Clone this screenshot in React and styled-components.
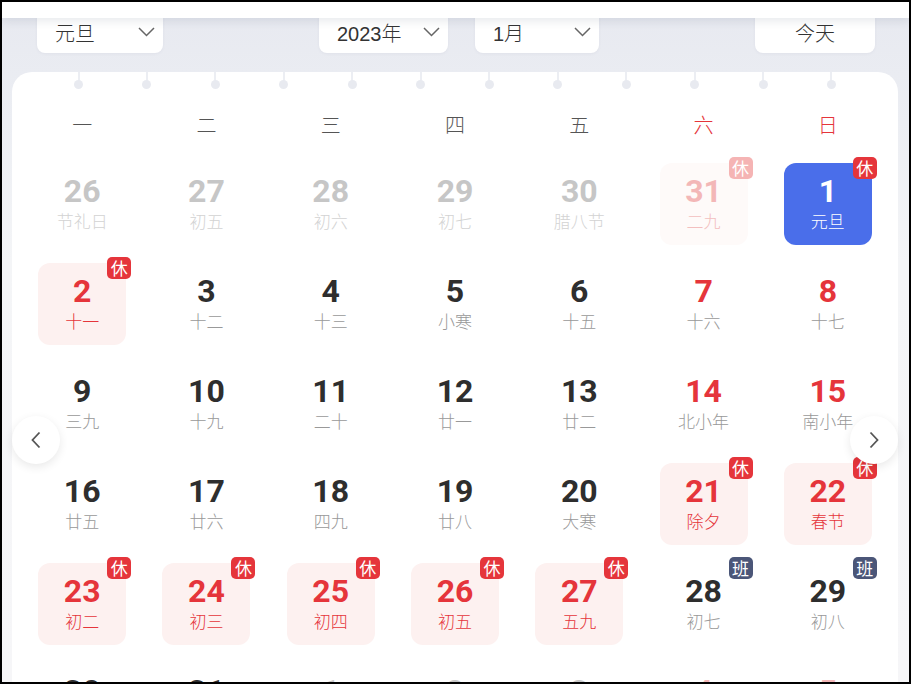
import React from "react";
import styled, { createGlobalStyle } from "styled-components";

const Global = createGlobalStyle`
  html, body { margin: 0; padding: 0; background: #fff; }
  * { box-sizing: border-box; }
`;

const Frame = styled.div`
  width: 911px;
  height: 684px;
  border: 2px solid #000;
  overflow: hidden;
  background: linear-gradient(#e7e9f0 0px, #eceef3 120px, #f4f5f7 260px, #f6f6f8 100%);
  font-family: "Noto Sans CJK SC", "Noto Sans", sans-serif;
  display: flex;
  flex-direction: column;
`;

const TopBar = styled.div`
  height: 16px;
  flex: none;
  background: #fff;
  box-shadow: 0 3px 10px rgba(60, 70, 100, 0.12);
  position: relative;
  z-index: 3;
`;

const Toolbar = styled.div`
  margin-top: -9px;
  padding: 0 34px 0 35px;
  display: flex;
  justify-content: space-between;
  align-items: flex-end;
  flex: none;
`;

const Group = styled.div`
  display: flex;
  gap: 27px;
`;

const SelectBox = styled.div`
  width: ${(p) => p.$w}px;
  height: 44px;
  background: #fff;
  border-radius: 8px;
  display: flex;
  align-items: center;
  justify-content: ${(p) => (p.$center ? "center" : "space-between")};
  padding-top: 2px;
  padding-right: ${(p) => (p.$center ? "0" : "8px")};
  padding-left: ${(p) => (p.$center ? "0" : "18px")};
  color: #333;
  font-size: 20px;
  font-weight: 300;
  font-family: ${(p) =>
    p.$latin
      ? '"Liberation Sans", "Noto Sans CJK SC", sans-serif'
      : '"Noto Sans CJK SC", sans-serif'};
  box-shadow: 0 1px 3px rgba(80, 90, 120, 0.06);
`;

const Chevron = styled.svg`
  width: 17px;
  height: 10px;
  flex: none;
`;

const Card = styled.div`
  margin: 19px 11px 0 10px;
  background: #fff;
  border-radius: 20px 20px 0 0;
  flex: 1;
  position: relative;
  padding: 0 8px;
`;

const Pins = styled.div`
  display: flex;
  justify-content: space-between;
  padding: 0 54px;
  height: 18px;
`;

const Pin = styled.div`
  width: 9px;
  height: 18px;
  display: flex;
  flex-direction: column;
  align-items: center;
  &::before {
    content: "";
    width: 2px;
    height: 9px;
    background: #eceef3;
  }
  &::after {
    content: "";
    width: 9px;
    height: 9px;
    border-radius: 50%;
    background: #e8eaf0;
    margin-top: -1px;
  }
`;

const WeekRow = styled.div`
  display: grid;
  grid-template-columns: repeat(7, 1fr);
  margin-top: 15px;
  height: 40px;
  margin-bottom: 9px;
`;

const WeekDay = styled.div`
  text-align: center;
  line-height: 40px;
  font-size: 20px;
  font-weight: 300;
  color: ${(p) => (p.$red ? "#e5353b" : "#555")};
`;

const Grid = styled.div`
  display: grid;
  grid-template-columns: repeat(7, 1fr);
  grid-auto-rows: 100px;
`;

const Slot = styled.div`
  display: flex;
  align-items: center;
  justify-content: center;
`;

const palettes = {
  normal: { bg: "transparent", num: "#2e2e2e", lunar: "#999" },
  weekend: { bg: "transparent", num: "#e5353b", lunar: "#999" },
  holiday: { bg: "#fdf1f0", num: "#e5353b", lunar: "#e5353b" },
  work: { bg: "transparent", num: "#2e2e2e", lunar: "#999" },
  prev: { bg: "transparent", num: "#c6c6c6", lunar: "#d3d3d3" },
  prevHoliday: { bg: "#fefaf9", num: "#f3b7b7", lunar: "#f3bfbf" },
  nextWeekend: { bg: "transparent", num: "#f3b7b7", lunar: "#f3bfbf" },
  selected: { bg: "#4a6eea", num: "#fff", lunar: "#fff" },
};

const Cell = styled.div`
  width: 88px;
  height: 82px;
  border-radius: 12px;
  background: ${(p) => palettes[p.$kind].bg};
  position: relative;
  display: flex;
  flex-direction: column;
  align-items: center;
  padding-top: 11px;
`;

const DayNum = styled.div`
  font-family: Roboto, "Liberation Sans", sans-serif;
  font-weight: 700;
  font-size: 32px;
  line-height: 34px;
  color: ${(p) => palettes[p.$kind].num};
`;

const Lunar = styled.div`
  margin-top: 2px;
  font-size: 17px;
  font-weight: 300;
  line-height: 22px;
  color: ${(p) => palettes[p.$kind].lunar};
`;

const Badge = styled.div`
  position: absolute;
  top: -6px;
  right: -5px;
  width: 24px;
  height: 22px;
  border-radius: 5px;
  background: ${(p) => p.$bg};
  color: #fff;
  font-size: 17px;
  line-height: 22px;
  text-align: center;
`;

const Arrow = styled.div`
  position: absolute;
  top: 344px;
  ${(p) => (p.$side === "left" ? "left: 0;" : "right: 0;")}
  width: 48px;
  height: 48px;
  border-radius: 50%;
  background: #fff;
  box-shadow: 0 3px 10px rgba(0, 0, 0, 0.09);
  display: flex;
  align-items: center;
  justify-content: center;
  z-index: 2;
`;

const weekdays = ["一", "二", "三", "四", "五", "六", "日"];

const rows = [
  [
    [26, "节礼日", "prev"],
    [27, "初五", "prev"],
    [28, "初六", "prev"],
    [29, "初七", "prev"],
    [30, "腊八节", "prev"],
    [31, "二九", "prevHoliday", "休"],
    [1, "元旦", "selected", "休"],
  ],
  [
    [2, "十一", "holiday", "休"],
    [3, "十二", "normal"],
    [4, "十三", "normal"],
    [5, "小寒", "normal"],
    [6, "十五", "normal"],
    [7, "十六", "weekend"],
    [8, "十七", "weekend"],
  ],
  [
    [9, "三九", "normal"],
    [10, "十九", "normal"],
    [11, "二十", "normal"],
    [12, "廿一", "normal"],
    [13, "廿二", "normal"],
    [14, "北小年", "weekend"],
    [15, "南小年", "weekend"],
  ],
  [
    [16, "廿五", "normal"],
    [17, "廿六", "normal"],
    [18, "四九", "normal"],
    [19, "廿八", "normal"],
    [20, "大寒", "normal"],
    [21, "除夕", "holiday", "休"],
    [22, "春节", "holiday", "休"],
  ],
  [
    [23, "初二", "holiday", "休"],
    [24, "初三", "holiday", "休"],
    [25, "初四", "holiday", "休"],
    [26, "初五", "holiday", "休"],
    [27, "五九", "holiday", "休"],
    [28, "初七", "work", "班"],
    [29, "初八", "work", "班"],
  ],
  [
    [30, "初九", "normal"],
    [31, "初十", "normal"],
    [1, "十一", "prev"],
    [2, "十二", "prev"],
    [3, "十三", "prev"],
    [4, "立春", "nextWeekend"],
    [5, "十五", "nextWeekend"],
  ],
];

const badgeColor = (kind, text) => {
  if (text === "班") return "#4b5678";
  if (kind === "prevHoliday") return "#f5b4b4";
  return "#e5353b";
};

const Down = () => (
  <Chevron viewBox="0 0 17 10">
    <polyline points="1,1 8.5,8.5 16,1" fill="none" stroke="#666" strokeWidth="1.5" />
  </Chevron>
);

const Select = ({ label, w, latin }) => (
  <SelectBox $w={w} $latin={latin}>
    <span>{label}</span>
    <Down />
  </SelectBox>
);

export default function App() {
  return (
    <>
      <Global />
      <Frame>
        <TopBar />
        <Toolbar>
          <Select label="元旦" w={126} />
          <Group>
            <Select label="2023年" w={129} latin />
            <Select label="1月" w={124} latin />
          </Group>
          <SelectBox $w={120} $center>
            今天
          </SelectBox>
        </Toolbar>
        <Card>
          <Pins>
            {Array.from({ length: 12 }).map((_, i) => (
              <Pin key={i} />
            ))}
          </Pins>
          <WeekRow>
            {weekdays.map((d, i) => (
              <WeekDay key={d} $red={i >= 5}>
                {d}
              </WeekDay>
            ))}
          </WeekRow>
          <Grid>
            {rows.flat().map(([d, l, kind, badge], i) => (
              <Slot key={i}>
                <Cell $kind={kind}>
                  <DayNum $kind={kind}>{d}</DayNum>
                  <Lunar $kind={kind}>{l}</Lunar>
                  {badge && <Badge $bg={badgeColor(kind, badge)}>{badge}</Badge>}
                </Cell>
              </Slot>
            ))}
          </Grid>
          <Arrow $side="left">
            <svg width="10" height="18" viewBox="0 0 10 18">
              <polyline points="8.5,1.5 1.5,9 8.5,16.5" fill="none" stroke="#555" strokeWidth="1.8" />
            </svg>
          </Arrow>
          <Arrow $side="right">
            <svg width="10" height="18" viewBox="0 0 10 18">
              <polyline points="1.5,1.5 8.5,9 1.5,16.5" fill="none" stroke="#555" strokeWidth="1.8" />
            </svg>
          </Arrow>
        </Card>
      </Frame>
    </>
  );
}
